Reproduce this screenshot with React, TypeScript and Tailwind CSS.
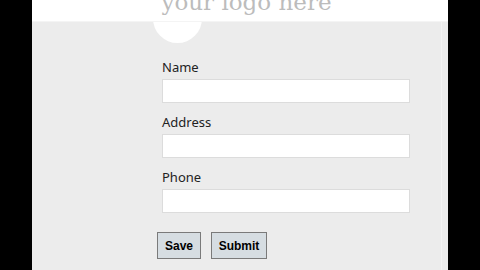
export default function App() {
  const fields = ["Name", "Address", "Phone"];

  return (
    <div className="flex h-[270px] w-[480px] overflow-hidden bg-black">
      <div className="w-[32px] shrink-0 bg-black" />

      <div className="relative flex w-[416px] shrink-0 flex-col bg-[#ececec]">
        {/* round badge under the logo */}
        <div className="absolute left-[121px] top-[-6px] h-[49px] w-[49px] rounded-full bg-white" />

        {/* header with cropped logo text */}
        <div className="relative z-10 flex h-[22px] shrink-0 items-start justify-center overflow-hidden border-b border-[#f4f4f4] bg-white pl-[13px]">
          <span className="mt-[-13px] whitespace-nowrap font-['DejaVu_Serif',serif] text-[23px] leading-[30px] text-[#bcbcbc]">
            your logo here
          </span>
        </div>

        <div className="mr-[6px] flex flex-1 border-r border-[#f3f3f3]">
          <form className="flex flex-col pl-[125px] pt-[36px]">
            {fields.map((f) => (
              <div key={f} className="mb-[10px] flex flex-col pl-[5px]">
                <label className="mb-[3px] h-[18px] font-['Noto_Sans',sans-serif] text-[13px] leading-[18px] text-[#222]">
                  {f}
                </label>
                <input
                  type="text"
                  className="h-[24px] w-[248px] border border-[#dcdcdc] bg-white outline-none"
                />
              </div>
            ))}
            <div className="mt-[9px] flex gap-[10px]">
              <button
                type="button"
                className="h-[27px] w-[44px] border border-[#7a7a7a] bg-[#d6dde2] font-['Liberation_Sans',sans-serif] text-[12px] font-bold text-black"
              >
                Save
              </button>
              <button
                type="button"
                className="h-[27px] w-[56px] border border-[#7a7a7a] bg-[#d6dde2] font-['Liberation_Sans',sans-serif] text-[12px] font-bold text-black"
              >
                Submit
              </button>
            </div>
          </form>
        </div>
      </div>

      <div className="flex-1 bg-black" />
    </div>
  );
}
